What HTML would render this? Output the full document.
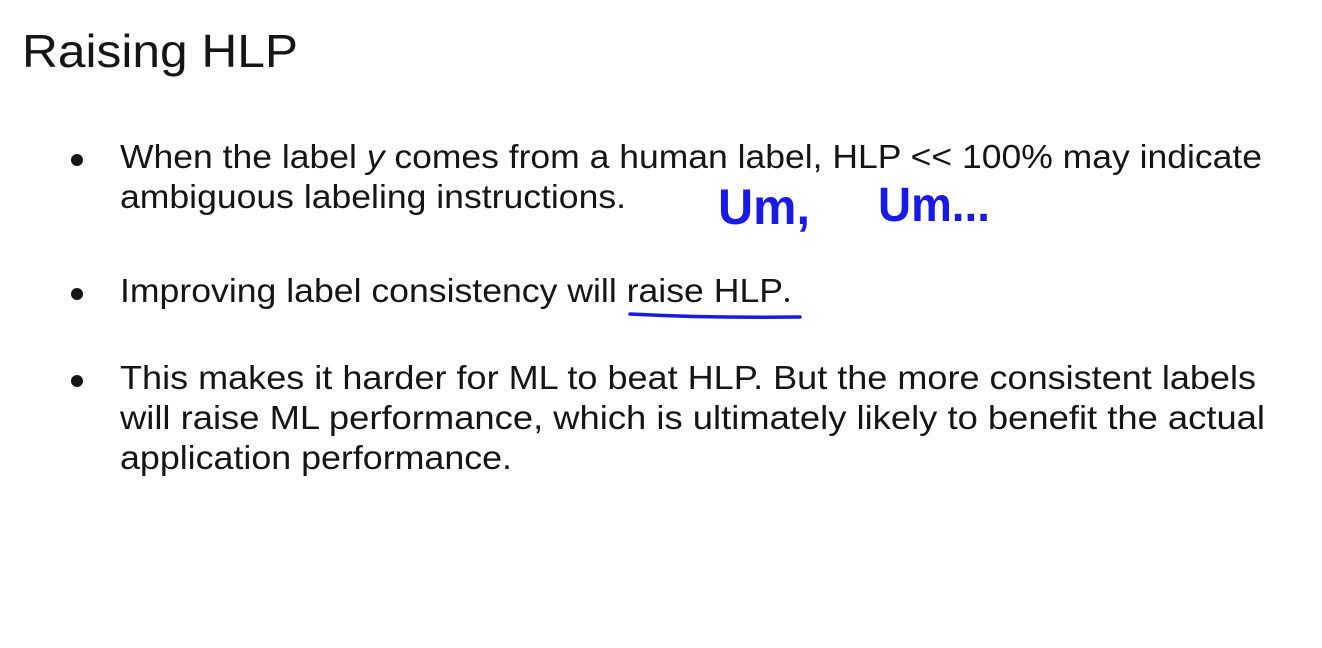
<!DOCTYPE html>
<html><head><meta charset="utf-8"><style>
html,body{margin:0;padding:0;background:#fff;width:1322px;height:648px;overflow:hidden}
svg text{font-family:"Liberation Sans",sans-serif;fill:#151515}
</style></head><body>
<svg width="1322" height="648" viewBox="0 0 1322 648" xmlns="http://www.w3.org/2000/svg">
<rect width="1322" height="648" fill="#fff"/>
<text x="22" y="67" font-size="46" textLength="276" lengthAdjust="spacingAndGlyphs">Raising HLP</text>
<circle cx="77" cy="160" r="6" fill="#151515"/>
<circle cx="77" cy="294" r="6" fill="#151515"/>
<circle cx="77" cy="381" r="6" fill="#151515"/>
<g font-size="33">
<text x="120" y="168" textLength="1142" lengthAdjust="spacingAndGlyphs">When the label <tspan font-style="italic">y</tspan> comes from a human label, HLP &lt;&lt; 100% may indicate</text>
<text x="120" y="208" textLength="506" lengthAdjust="spacingAndGlyphs">ambiguous labeling instructions.</text>
<text x="120" y="302" textLength="663" lengthAdjust="spacingAndGlyphs">Improving label consistency will raise HLP</text>
<text x="120" y="389" textLength="1136" lengthAdjust="spacingAndGlyphs">This makes it harder for ML to beat HLP. But the more consistent labels</text>
<text x="120" y="429" textLength="1145" lengthAdjust="spacingAndGlyphs">will raise ML performance, which is ultimately likely to benefit the actual</text>
<text x="120" y="469" textLength="392" lengthAdjust="spacingAndGlyphs">application performance.</text>
</g>
<text x="718" y="224" font-size="50" font-weight="bold" style="fill:#1a1ae6" textLength="92" lengthAdjust="spacingAndGlyphs">Um,</text>
<text x="878" y="221" font-size="48" font-weight="bold" style="fill:#1a1ae6" textLength="112" lengthAdjust="spacingAndGlyphs">Um...</text>
<path d="M630 314 Q700 318 800 317" stroke="#1a1ae6" stroke-width="3.5" fill="none" stroke-linecap="round"/>
<circle cx="787" cy="300" r="2" fill="#151515"/>
</svg>
</body></html>
